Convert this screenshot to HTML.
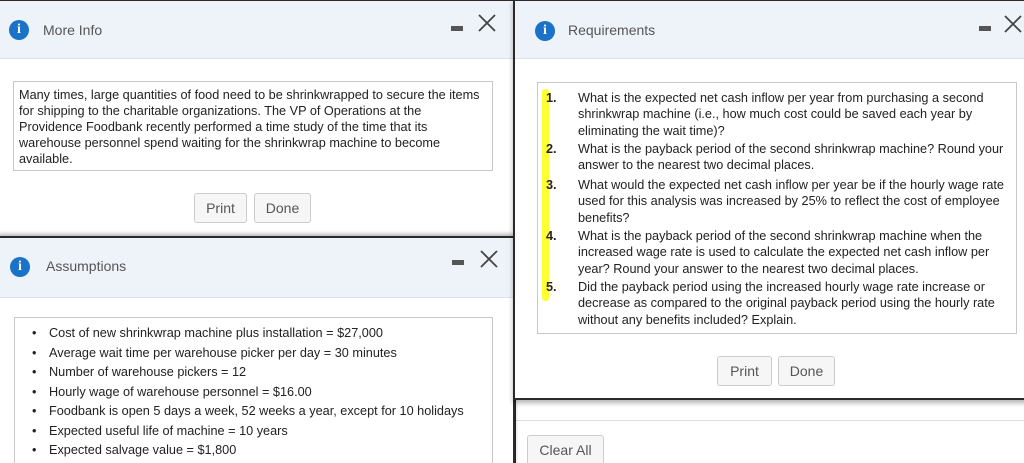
<!DOCTYPE html>
<html><head><meta charset="utf-8"><style>
*{box-sizing:border-box;margin:0;padding:0}
html,body{width:1024px;height:463px;overflow:hidden}
body{background:#fff;font-family:"Liberation Sans",Arial,sans-serif;color:#333;position:relative}
.win{position:absolute;background:#fff;border:2px solid #2a2a2a}
.hdr{position:absolute;left:0;right:0;top:0;background:#eef3fa;border-bottom:1px solid #d8e2ee}
.ic{position:absolute;width:20px;height:20px;border-radius:50%;background:#1a73c8;color:#fff;font:bold 14px "Liberation Serif",serif;text-align:center;line-height:20px}
.ttl{position:absolute;font-size:14px;color:#555}
.min{position:absolute;width:12px;height:5px;background:#555}
.x{position:absolute;width:18px;height:18px}
.box{position:absolute;border:1px solid #c8c8c8;font-size:12.7px;line-height:16px;color:#222;white-space:nowrap}
.btn{position:absolute;height:30px;border:1px solid #ccc;border-radius:3px;background:#f6f6f6;font-size:14px;color:#555;text-align:center;line-height:28px}
</style></head><body>

<div style="position:absolute;left:514px;top:395px;width:510px;height:68px;border-left:2px solid #2a2a2a;background:#fff"></div>
<div style="position:absolute;left:516px;top:420px;width:508px;height:1px;background:#ddd"></div>
<div class="btn" style="left:527px;top:435px;width:77px;height:32px">Clear All</div>

<!-- More Info -->
<div class="win" style="left:-2px;top:-1px;width:517px;height:239px">
 <div class="hdr" style="height:58px"></div>
 <div class="ic" style="left:9px;top:19px">i</div>
 <div class="ttl" style="left:43px;top:21px">More Info</div>
 <div class="min" style="left:451px;top:25px"></div>
 <svg class="x" style="left:478px;top:13px" viewBox="0 0 18 18"><path d="M1 1L17 17M17 1L1 17" stroke="#444" stroke-width="1.8"/></svg>
 <div class="box" style="left:13px;top:80px;width:480px;height:90px;padding:5px 5px">Many times, large quantities of food need to be shrinkwrapped to secure the items<br>for shipping to the charitable organizations. The VP of Operations at the<br>Providence Foodbank recently performed a time study of the time that its<br>warehouse personnel spend waiting for the shrinkwrap machine to become<br>available.</div>
 <div class="btn" style="left:194px;top:192px;width:53px">Print</div>
 <div class="btn" style="left:254px;top:192px;width:57px">Done</div>
</div>

<!-- Assumptions -->
<div class="win" style="left:-2px;top:236px;width:517px;height:240px;box-shadow:0 -2px 4px rgba(0,0,0,.3)">
 <div class="hdr" style="height:60px"></div>
 <div class="ic" style="left:10px;top:19px">i</div>
 <div class="ttl" style="left:46px;top:20px">Assumptions</div>
 <div class="min" style="left:452px;top:22px"></div>
 <svg class="x" style="left:480px;top:12px" viewBox="0 0 18 18"><path d="M1 1L17 17M17 1L1 17" stroke="#444" stroke-width="1.8"/></svg>
 <div class="box" style="left:14px;top:79px;width:479px;height:160px;line-height:19.5px;padding:6px 0 0 0">
  <div style="position:absolute;left:17px;top:6px">•<br>•<br>•<br>•<br>•<br>•<br>•</div>
  <div style="position:absolute;left:34px;top:6px">Cost of new shrinkwrap machine plus installation = $27,000<br>Average wait time per warehouse picker per day = 30 minutes<br>Number of warehouse pickers = 12<br>Hourly wage of warehouse personnel = $16.00<br>Foodbank is open 5 days a week, 52 weeks a year, except for 10 holidays<br>Expected useful life of machine = 10 years<br>Expected salvage value = $1,800</div>
 </div>
</div>

<!-- Requirements -->
<div class="win" style="left:513px;top:-1px;width:515px;height:401px;box-shadow:0 3px 5px rgba(0,0,0,.3)">
 <div class="hdr" style="height:58px"></div>
 <div class="ic" style="left:20px;top:20px">i</div>
 <div class="ttl" style="left:53px;top:21px">Requirements</div>
 <div class="min" style="left:464px;top:25px"></div>
 <svg class="x" style="left:489px;top:14px" viewBox="0 0 18 18"><path d="M1 1L17 17M17 1L1 17" stroke="#444" stroke-width="1.8"/></svg>
 <div style="position:absolute;left:27px;top:88px;width:7px;height:212px;background:#ffff33;border-radius:3px"></div>
 <div class="box" style="left:22px;top:81px;width:480px;height:252px;line-height:16.3px">
  <div style="position:absolute;left:8px;top:7px;font-weight:bold">1.</div>
  <div style="position:absolute;left:40px;top:7px">What is the expected net cash inflow per year from purchasing a second<br>shrinkwrap machine (i.e., how much cost could be saved each year by<br>eliminating the wait time)?</div>
  <div style="position:absolute;left:8px;top:58px;font-weight:bold">2.</div>
  <div style="position:absolute;left:40px;top:58px">What is the payback period of the second shrinkwrap machine? Round your<br>answer to the nearest two decimal places.</div>
  <div style="position:absolute;left:8px;top:94px;font-weight:bold">3.</div>
  <div style="position:absolute;left:40px;top:94px">What would the expected net cash inflow per year be if the hourly wage rate<br>used for this analysis was increased by 25% to reflect the cost of employee<br>benefits?</div>
  <div style="position:absolute;left:8px;top:145px;font-weight:bold">4.</div>
  <div style="position:absolute;left:40px;top:145px">What is the payback period of the second shrinkwrap machine when the<br>increased wage rate is used to calculate the expected net cash inflow per<br>year? Round your answer to the nearest two decimal places.</div>
  <div style="position:absolute;left:8px;top:196px;font-weight:bold">5.</div>
  <div style="position:absolute;left:40px;top:196px">Did the payback period using the increased hourly wage rate increase or<br>decrease as compared to the original payback period using the hourly rate<br>without any benefits included? Explain.</div>
 </div>
 <div class="btn" style="left:202px;top:355px;width:55px">Print</div>
 <div class="btn" style="left:263px;top:355px;width:57px">Done</div>
</div>
</body></html>
